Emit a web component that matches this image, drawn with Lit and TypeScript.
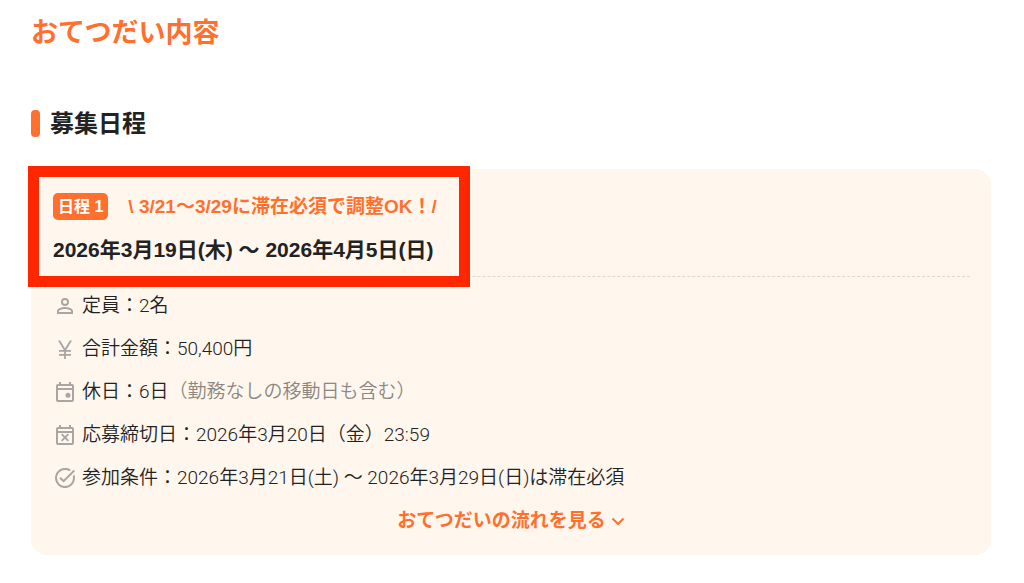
import { LitElement, html, css, svg } from "lit";
import { customElement } from "lit/decorators.js";

const icons = {
  person: svg`<path d="M12 5.900a2.100 2.100 0 1 1 0 4.200 2.100 2.100 0 0 1 0-4.200m0 9c3 0 6.100 1.500 6.100 2.100v1.100H5.900V17c0-.6 3.100-2.100 6.100-2.100M12 4a4 4 0 1 0 0 8 4 4 0 0 0 0-8m0 9c-2.700 0-8 1.300-8 4v3h16v-3c0-2.700-5.300-4-8-4"/>`,
  yen: svg`<path d="M12.900 13H18v1.700h-5.100v2.300H18v1.700h-5.100V22h-1.800v-3.300H6V17h5.100v-2.300H6V13h4.800L5 3.500h2.200l4.800 8 4.800-8H19L13.200 13z"/>`,
  event: svg`<path d="M19 4h-1V2h-2v2H8V2H6v2H5a2 2 0 0 0-2 2v14c0 1.100.9 2 2 2h14a2 2 0 0 0 2-2V6a2 2 0 0 0-2-2m0 16H5V10h14zm0-12H5V6h14zM15 12.800a2.500 2.500 0 1 1 0 5 2.500 2.500 0 0 1 0-5"/>`,
  busy: svg`<path d="M9.300 18.500l2.700-2.700 2.700 2.700 1.300-1.300-2.700-2.700 2.700-2.700-1.300-1.300-2.700 2.700-2.700-2.700L8 11.800l2.700 2.700L8 17.200zM19 4h-1V2h-2v2H8V2H6v2H5a2 2 0 0 0-2 2v14c0 1.100.9 2 2 2h14a2 2 0 0 0 2-2V6a2 2 0 0 0-2-2m0 16H5V10h14zm0-12H5V6h14z"/>`,
  check: svg`<path d="M22 5.200L10.600 16.600l-4.200-4.200 1.400-1.400 2.800 2.800L20.600 3.800zM19.800 10.200c.1.600.2 1.200.2 1.800a8 8 0 1 1-8-8c1.600 0 3.100.5 4.300 1.300l1.500-1.500A10 10 0 1 0 22 12c0-1.200-.2-2.300-.6-3.400z"/>`,
};

@customElement("app-root")
export class AppRoot extends LitElement {
  static styles = css`
    :host {
      display: block;
      font-family: "Liberation Sans", "Noto Sans CJK JP", sans-serif;
      color: #222;
    }
    .page {
      padding: 13px 33px 28px 31px;
    }
    .title {
      margin: 0;
      font-size: 27px;
      line-height: 40px;
      font-weight: 700;
      color: #ff702e;
    }
    .section {
      display: flex;
      align-items: center;
      gap: 10px;
      margin: 53px 0 28px;
      font-size: 24px;
      line-height: 35px;
      font-weight: 700;
    }
    .section::before {
      content: "";
      width: 9px;
      height: 27px;
      border-radius: 4px;
      background: #ff702e;
    }
    .card {
      padding: 22px 21px 20px 22px;
      border-radius: 16px;
      background: #fff6ed;
    }
    .head {
      position: relative;
      padding-bottom: 10px;
      border-bottom: 1px dashed #ddd8d2;
    }
    .frame {
      position: absolute;
      top: -25px;
      left: -25px;
      width: 442px;
      height: 121px;
      box-sizing: border-box;
      border: 11px solid #ff2600;
    }
    .tags {
      display: flex;
      align-items: center;
      gap: 20px;
      height: 31px;
    }
    .badge {
      padding: 0 5px;
      border-radius: 5px;
      background: #ff702e;
      color: #fff;
      font-size: 16px;
      line-height: 27px;
      font-weight: 700;
    }
    .note {
      font-size: 19px;
      line-height: 28px;
      font-weight: 700;
      color: #ff702e;
    }
    .dates {
      margin: 12px 0 0;
      font-size: 21px;
      line-height: 32px;
      font-weight: 700;
    }
    .rows {
      display: grid;
      gap: 15px;
      margin: 15px 0;
      padding: 0;
      list-style: none;
      font-family: Roboto, "Noto Sans CJK JP", sans-serif;
      font-size: 19px;
      line-height: 28px;
      font-weight: 350;
    }
    .row {
      display: flex;
      align-items: center;
      gap: 5px;
    }
    .icon {
      flex: none;
      width: 24px;
      height: 24px;
      fill: #a8a5a2;
    }
    .muted {
      color: #8b8783;
    }
    .more {
      display: flex;
      align-items: center;
      gap: 4px;
      margin: 0 auto;
      padding: 0;
      border: 0;
      background: none;
      color: #ff702e;
      font: inherit;
      font-size: 19px;
      line-height: 28px;
      font-weight: 700;
      cursor: pointer;
    }
    .chevron {
      width: 16px;
      height: 16px;
      fill: none;
      stroke: currentColor;
      stroke-width: 2;
    }
  `;

  private row(icon: unknown, content: unknown) {
    return html`<li class="row">
      <svg class="icon" viewBox="0 0 24 24" aria-hidden="true">${icon}</svg>
      <span>${content}</span>
    </li>`;
  }

  render() {
    return html`
      <main class="page" lang="ja">
        <h1 class="title">おてつだい内容</h1>
        <h2 class="section">募集日程</h2>
        <section class="card">
          <header class="head">
            <div class="tags">
              <span class="badge">日程 1</span>
              <span class="note">\\ 3/21〜3/29に滞在必須で調整OK！/</span>
            </div>
            <h3 class="dates">2026年3月19日(木) 〜 2026年4月5日(日)</h3>
            <div class="frame"></div>
          </header>
          <ul class="rows">
            ${this.row(icons.person, "定員：2名")}
            ${this.row(icons.yen, "合計金額：50,400円")}
            ${this.row(icons.event, html`休日：6日<span class="muted">（勤務なしの移動日も含む）</span>`)}
            ${this.row(icons.busy, "応募締切日：2026年3月20日（金）23:59")}
            ${this.row(icons.check, "参加条件：2026年3月21日(土) 〜 2026年3月29日(日)は滞在必須")}
          </ul>
          <button class="more" type="button">
            おてつだいの流れを見る
            <svg class="chevron" viewBox="0 0 16 16" aria-hidden="true"><path d="M2.500 5.500L8 11l5.500-5.500" /></svg>
          </button>
        </section>
      </main>
    `;
  }
}
